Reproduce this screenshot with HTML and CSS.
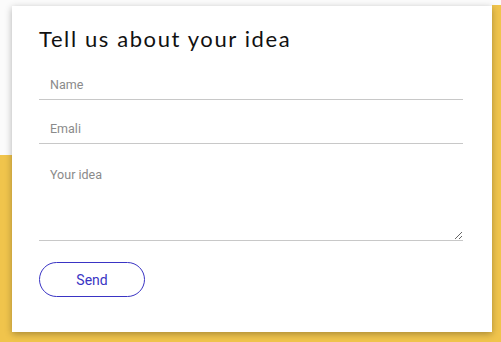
FILE: index.html
```html
<!DOCTYPE html>
<html lang="en">
<head>
  <meta charset="UTF-8">
  <meta name="viewport" content="width=device-width, initial-scale=1.0">
  <title>Contact</title>
  <link rel="stylesheet" href="styles.css">
</head>
<body>
  <main class="page">
    <form class="card">
      <h2 class="card-title">Tell us about your idea</h2>
      <input class="field" type="text" placeholder="Name">
      <input class="field" type="text" placeholder="Emali">
      <textarea class="field field-area" placeholder="Your idea"></textarea>
      <button class="send" type="button">Send</button>
    </form>
  </main>
</body>
</html>
```

FILE: styles.css
```css
html, body {
  margin: 0;
  height: 100%;
}
body {
  font-family: Roboto, "Liberation Sans", sans-serif;
  background:
    linear-gradient(#f0c44c, #f0c44c) 0 155px / 100% 100% no-repeat,
    linear-gradient(#f0c44c, #f0c44c) 492px 5px / 100% 100% no-repeat,
    #fbfbfb;
  overflow: hidden;
}
.page {
  padding: 6px 0 0 12px;
}
.card {
  box-sizing: border-box;
  width: 480px;
  height: 326px;
  padding: 20px 29px 0 27px;
  background: #fff;
  box-shadow: 0 2px 7px rgba(0, 0, 0, 0.3);
  display: flex;
  flex-direction: column;
  align-items: flex-start;
}
.card-title {
  margin: 0 0 17px;
  font-family: Lato, "Open Sans", sans-serif;
  font-weight: 400;
  font-size: 22px;
  line-height: 26px;
  letter-spacing: 1.6px;
  color: #111;
}
.field {
  box-sizing: border-box;
  width: 100%;
  height: 31px;
  margin: 0 0 13px;
  padding: 0 11px;
  border: 0;
  border-bottom: 1px solid #c8c8c8;
  font-family: Roboto, sans-serif;
  font-size: 12.5px;
  color: #333;
  outline: none;
}
.field::placeholder {
  color: #8a8a8a;
}
.field-area {
  height: 84px;
  padding-top: 10px;
  margin-bottom: 21px;
  resize: vertical;
}
.send {
  width: 106px;
  height: 35px;
  border: 1px solid #3a34c4;
  border-radius: 18px;
  background: #fff;
  color: #3a34c4;
  font-family: Roboto, sans-serif;
  font-size: 14px;
  cursor: pointer;
}
```
